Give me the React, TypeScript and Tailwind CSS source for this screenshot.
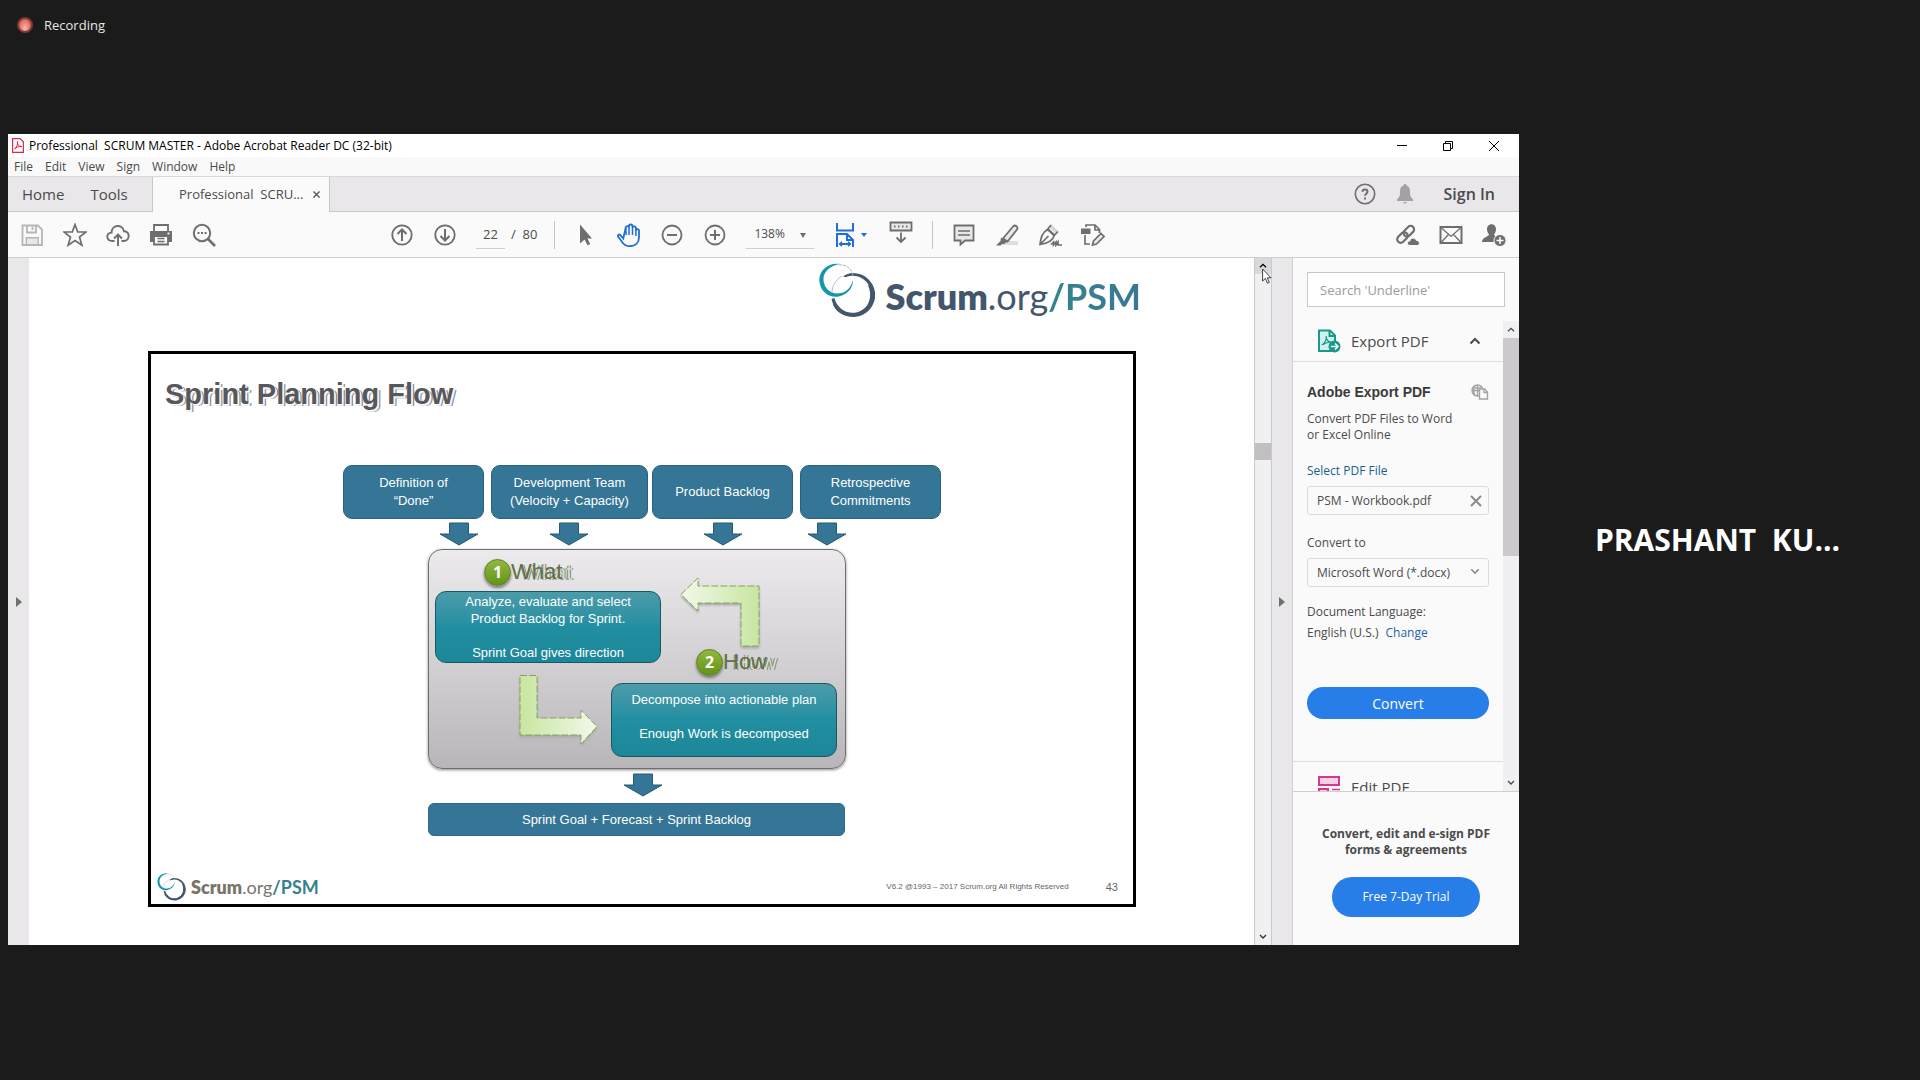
import type { ReactNode } from 'react';

const UI = "font-['Open_Sans','Noto_Sans',sans-serif]";
const ARIAL = "font-['Liberation_Sans',Arial,sans-serif]";

function Icon({ children, className = 'size-6' }: { children: ReactNode; className?: string }) {
  return (
    <svg
      viewBox="0 0 24 24"
      className={className}
      fill="none"
      stroke="currentColor"
      strokeWidth="1.8"
      aria-hidden="true"
    >
      {children}
    </svg>
  );
}

function Tool({ label, children, className = 'text-[#6e6e6e]' }: { label: string; children: ReactNode; className?: string }) {
  return (
    <button type="button" aria-label={label} className={`shrink-0 ${className}`}>
      <Icon>{children}</Icon>
    </button>
  );
}

function Chevron({ up = false, className = '' }: { up?: boolean; className?: string }) {
  return (
    <svg viewBox="0 0 12 8" className={className} fill="none" stroke="currentColor" strokeWidth="2" aria-hidden="true">
      <path d={up ? 'M1.5 6.5 6 2l4.5 4.5' : 'M1.5 1.5 6 6l4.5-4.5'} />
    </svg>
  );
}

function LogoMark({ className }: { className: string }) {
  return (
    <svg viewBox="0 0 56 55" className={className} aria-hidden="true">
      <path
        fillRule="evenodd"
        fill="#44566c"
        d="M34 10a22 22 0 1 1-21.500 26l3-1A18.500 18.500 0 1 0 27 14l-3 0C27 11 30 10 34 10Z"
      />
      <path d="M15 41c4 9 14 13 23 10" fill="none" stroke="#44566c" strokeWidth="2.500" />
      <path d="M50 22c5 11 1 23-9 28" fill="none" stroke="#44566c" strokeWidth="2" />
      <path
        fill="#1597ab"
        d="M21 1C9-1-1 8 .500 19 2 31 14 37 24 32c7-3 10-9 10-15-2 7-6 12-12 13C13 32 5 26 4.500 17 4 9 11 2.500 21 1Z"
      />
      <path d="M20 2c8-1 13 5 14 10" fill="none" stroke="#9db6bf" strokeWidth="1" strokeDasharray="3 1" />
      <path d="M13 30c0-8 4-13 10-17" fill="none" stroke="#b7c1ca" strokeWidth="1" />
    </svg>
  );
}

const WINDOW_MENU = ['File', 'Edit', 'View', 'Sign', 'Window', 'Help'];

function TitleBar() {
  return (
    <div className="flex h-[23px] items-center bg-white pl-1 text-[12px] text-black">
      <svg viewBox="0 0 12 15" className="h-[15px] w-3" fill="none" stroke="#e0284a" aria-hidden="true">
        <path d="M.6.6h7.600l3.200 3.200v10.600H.6Z" strokeWidth="1.200" />
        <path d="M2.500 11c2-1 3.500-5 3-7.500C5 6.500 7 8.500 9.800 8.500 7 8 4 9.500 2.500 11Z" />
      </svg>
      <span className="ml-[5px] whitespace-pre">{'Professional  SCRUM MASTER - Adobe Acrobat Reader DC (32-bit)'}</span>
      <div className="ml-auto mr-5 flex items-center gap-9">
        <button type="button" aria-label="Minimize">
          <svg viewBox="0 0 10 10" className="size-[10px]" stroke="#000"><path d="M0 4.500h10" /></svg>
        </button>
        <button type="button" aria-label="Restore">
          <svg viewBox="0 0 10 10" className="size-[10px]" fill="none" stroke="#000"><path d="M.5 2.500h7v7h-7ZM2.500 2.500v-2h7v7h-2" /></svg>
        </button>
        <button type="button" aria-label="Close">
          <svg viewBox="0 0 10 10" className="size-[10px]" stroke="#000"><path d="m0 0 10 10M10 0 0 10" /></svg>
        </button>
      </div>
    </div>
  );
}

function MenuBar() {
  return (
    <nav className="flex h-5 items-center gap-3 border-b border-[#d8d8d8] bg-[#f9f9f9] pl-[6px] text-[12px] text-[#4a4a4a]">
      {WINDOW_MENU.map((item) => (
        <button key={item} type="button">{item}</button>
      ))}
    </nav>
  );
}

function TabBar() {
  return (
    <div className="flex h-[35px] items-stretch bg-[#e9e7ea] text-[#4b4b4b]">
      <div className="flex w-[144px] items-center gap-[26px] border-b border-[#c8c8c8] pl-[14px] text-[15px]">
        <button type="button">Home</button>
        <button type="button">Tools</button>
      </div>
      <div className="flex w-[178px] items-center border-x border-[#c8c8c8] bg-[#fafafa] pl-[26px] pr-[9px] text-[13px]">
        <button type="button" className="whitespace-pre">{'Professional  SCRU...'}</button>
        <button type="button" aria-label="Close tab" className="ml-auto">
          <svg viewBox="0 0 8 8" className="size-[7px]" stroke="#555" strokeWidth="1.500"><path d="m.5.5 7 7M7.500.5l-7 7" /></svg>
        </button>
      </div>
      <div className="flex flex-1 items-center justify-end gap-[17px] border-b border-[#c8c8c8] pr-6">
        <button type="button" aria-label="Help" className="text-[#6e6e6e]">
          <svg viewBox="0 0 22 22" className="size-[22px]" fill="none" stroke="currentColor" strokeWidth="1.600">
            <circle cx="11" cy="11" r="9.700" />
            <path d="M8.500 8.800c0-3.200 5-3.200 5 0 0 1.900-2.500 1.900-2.500 4" strokeWidth="2" />
            <path d="M11 14.500v2" strokeWidth="2" />
          </svg>
        </button>
        <button type="button" aria-label="Notifications" className="text-[#a2a2a2]">
          <Icon className="size-6">
            <path d="M12 2c-1.200 0-1.500.7-1.500 1.600C7.500 4.500 7 7 7 11c0 3-1 4.500-3 6.500V19h16v-1.500c-2-2-3-3.500-3-6.500 0-4-.5-6.500-3.500-7.400C13.500 2.700 13.200 2 12 2ZM10 20h4l-2 2Z" fill="currentColor" stroke="none" />
          </Icon>
        </button>
        <button type="button" className="ml-[10px] text-[16px] font-semibold">Sign In</button>
      </div>
    </div>
  );
}

function Toolbar() {
  return (
    <div className="flex h-[46px] items-center border-b border-[#cfcfcf] bg-[#fafafa] pl-3 pr-[13px] text-[12px] text-[#4b4b4b]">
      <div className="flex w-[370px] shrink-0 items-center gap-[19px]">
        <Tool label="Save" className="text-[#b5b5b5]">
          <path d="M2.500 2.500h15.500l4 4v15.500H2.500Z" />
          <path d="M7 3v6.500h9V3M12.500 4v3M6.500 21.500V15h11.500v6.500" />
          <path d="M7 15.500h10.500V21H7Z" fill="#e8e8e8" stroke="none" />
        </Tool>
        <Tool label="Star">
          <path d="m12 1.500 2.700 7.500h8.300l-6.500 5 2.400 8.200L12 17.500l-6.900 4.700 2.400-8.200L1 9h8.300Z" strokeWidth="1.700" />
        </Tool>
        <Tool label="Upload">
          <path d="M8.500 18H6.500C0 18-.5 10.200 5.600 9.600 5.500 1.500 16.500.5 18 8.300c6.300-.3 6.300 9.700-.3 9.700H15.500M12 23V12M8 15.500l4-4 4 4" strokeWidth="1.900" />
        </Tool>
        <Tool label="Print">
          <path d="M1 8h22v11h-4v-5H5v5H1Z" fill="currentColor" stroke="none" />
          <path d="M5 8V2h14v6M5 14v7.500h14V14" />
          <path d="M8.500 15.500h7M8.500 18.500h7" strokeWidth="1.300" />
          <path d="M18.500 10.500h2" stroke="#fff" />
        </Tool>
        <Tool label="Find">
          <circle cx="10" cy="10" r="8.200" strokeWidth="2" />
          <path d="m16 16 7 7" strokeWidth="2.600" />
          <path d="M5.500 10h2M9 10h2M12.500 10h2" />
        </Tool>
      </div>
      <div className="flex items-center">
        <div className="flex items-center gap-[19px]">
          <Tool label="Previous page">
            <circle cx="12" cy="12" r="9.700" /><path d="M12 18V7M7.500 11 12 6.500 16.500 11" strokeWidth="2" />
          </Tool>
          <Tool label="Next page">
            <circle cx="12" cy="12" r="9.700" /><path d="M12 6v11M7.500 13l4.500 4.500 4.500-4.500" strokeWidth="2" />
          </Tool>
        </div>
        <input aria-label="Page number" defaultValue="22" className="ml-[19px] h-7 w-[29px] border-b border-[#cfcfcf] bg-transparent text-center text-[13px]" />
        <span className="ml-[6px] whitespace-pre text-[13px]">{'/  80'}</span>
        <div className="ml-[17px] h-7 w-px bg-[#c4c4c4]" />
        <div className="ml-[19px] flex items-center gap-[19px]">
          <Tool label="Select">
            <path d="M6 1.500v19l4.600-4 2.900 5.800 2.700-1.300-2.800-5.600H18Z" fill="currentColor" stroke="none" />
          </Tool>
          <Tool label="Hand" className="text-[#1f6fd6]">
            <path d="M6.300 15.500 3.400 12.200c-1.600-1.600-3.300.2-2.100 1.600l4.500 6.200c1.700 2.300 3.600 3.200 7 3.200 6 0 9.200-3.700 9.200-9.200V7.800c0-2.200-3-2.200-3.100 0V5c0-2.200-3.400-2.200-3.400 0V3.300c0-2.400-3.600-2.400-3.600 0V4.600c-.2-2.100-3.200-2-3.200.2Z" />
            <path d="M8.700 4.800 9.200 12M12 3.300V12M15.500 4.500V12M18.900 7V13" strokeWidth="1.500" />
          </Tool>
          <Tool label="Zoom out">
            <circle cx="12" cy="12" r="9.500" /><path d="M7 12h10" strokeWidth="2" />
          </Tool>
          <Tool label="Zoom in">
            <circle cx="12" cy="12" r="9.500" /><path d="M7 12h10M12 7v10" strokeWidth="2" />
          </Tool>
        </div>
        <div className="relative ml-[19px] h-7 w-[68px] border-b border-[#cfcfcf]">
          <select aria-label="Zoom level" defaultValue="138%" className="size-full appearance-none bg-transparent pl-2 text-[12px]">
            <option>138%</option>
          </select>
          <svg viewBox="0 0 6 5" className="pointer-events-none absolute right-2 top-3 h-[5px] w-[6px]" fill="#6e6e6e"><path d="M0 0h6L3 5Z" /></svg>
        </div>
        <button type="button" aria-label="Fit width" className="ml-[19px] flex items-center gap-1 text-[#1f6fd6]">
          <Icon>
            <path d="M4 0v7.500h16V0M4 24V11h10l6 6v7M14 11v6h6M7 21h10" strokeWidth="2" />
            <path d="m9 18.800-2.500 2.200L9 23.200M15 18.800l2.500 2.200-2.500 2.200" strokeWidth="1.400" />
          </Icon>
          <svg viewBox="0 0 6 4" className="h-1 w-[6px]" fill="currentColor"><path d="M0 0h6L3 4Z" /></svg>
        </button>
        <div className="ml-[22px]">
          <Tool label="Read mode">
            <path d="M1.500 2.500h21v8h-21Z" fill="#e8e8e8" />
            <path d="M5 6.500h1.500M9 6.500h1.500M13 6.500h1.500M17 6.500h1.500M12 12.500V22M7.500 17.500 12 22l4.500-4.500" />
          </Tool>
        </div>
        <div className="ml-[19px] h-7 w-px bg-[#c4c4c4]" />
        <div className="ml-[19px] flex items-center gap-[19px]">
          <Tool label="Comment">
            <path d="M2.500 2.500h19v15H13l-4.500 4v-4h-6Z" fill="#e8e8e8" /><path d="M6 8h12M6 12h12" strokeWidth="1.400" />
          </Tool>
          <Tool label="Highlight">
            <path d="M8 18h15v4H4Z" fill="#dedede" stroke="none" />
            <path d="M8 15.500 18 3.500c2-2.300 5.700.4 4 3L12.500 18.500Z" fill="#e8e8e8" />
            <path d="m6 14.500 6 4.500-3 2H7l-1.500 1.500H1L5.500 18Z" fill="currentColor" stroke="none" />
          </Tool>
          <Tool label="Sign">
            <path d="m13 1 7 7-2.500 2.500-6-6Z" fill="#d6d6d6" stroke="none" />
            <path d="M2 21.500C3 14 4 10 10 6l6.500 6C15 17.500 9 20.500 2 21.500Zm0 0 8.500-8.500M13 2 9.500 6.500 16 12.500l4-4M13 21.500l2.500-2.500v3l2.500-3v3l2-3v3h4" strokeWidth="1.700" />
          </Tool>
          <Tool label="Edit">
            <path d="M5 4V2h9l4.500 4.500V10M14 2v5h5M4 12v9h5" strokeWidth="1.700" />
            <path d="M0 5.500h9.500V11H0Z" fill="currentColor" stroke="none" />
            <path d="m11.500 22 1-4L20 10.500l3 3-7.500 7.500Z" fill="#e8e8e8" strokeWidth="1.700" />
          </Tool>
        </div>
      </div>
      <div className="ml-auto flex items-center gap-[19px]">
        <Tool label="Share link">
          <g transform="rotate(-45 10 11)" strokeWidth="2.200">
            <rect x="-1" y="7.500" width="12" height="7" rx="3.500" />
            <rect x="8" y="7.500" width="12" height="7" rx="3.500" />
          </g>
          <path d="M14 22.500c-3.500 0-3.500-4.500 0-4.700.5-3.500 5.500-3.500 6.200-.5 4 .2 4 5.200 1 5.200Z" fill="currentColor" stroke="#fafafa" strokeWidth="1" />
        </Tool>
        <Tool label="Email">
          <path d="M1.500 4h21v16h-21Z" strokeWidth="2" /><path d="m2 4.500 10 9 10-9M2 19.500l7.500-8M22 19.500l-7.500-8" strokeWidth="1.300" />
        </Tool>
        <Tool label="Share with people">
          <path d="M5 6c0-6.500 9-6.500 9 0 0 3-1 4-2 5.500 0 2 6 2 6 7.500H0c0-5 7-5.500 7-7.500C6 10 5 9 5 6Z" fill="currentColor" stroke="none" />
          <circle cx="18" cy="17.500" r="6" fill="currentColor" stroke="#fafafa" strokeWidth="1" />
          <path d="M14.500 17.500h7M18 14v7" stroke="#fff" strokeWidth="1.500" />
        </Tool>
      </div>
    </div>
  );
}

function DownArrow({ className }: { className: string }) {
  return (
    <svg viewBox="0 0 40 24" className={`absolute h-6 w-10 ${className}`} aria-hidden="true">
      <path d="M10.500 1h19v11H39L20 23 1 12h9.500Z" fill="#357595" stroke="#245a75" />
    </svg>
  );
}

function InputBox({ className, children }: { className: string; children: ReactNode }) {
  return (
    <div className={`flex h-[54px] items-center justify-center rounded-[9px] border border-[#28617f] bg-[#357595] pb-px text-center text-[13px] leading-[18px] text-white ${className}`}>
      <p>{children}</p>
    </div>
  );
}

function StepLabel({ n, text, className }: { n: number; text: string; className: string }) {
  return (
    <div className={`absolute flex items-center ${className}`}>
      <span className="flex size-[27px] items-center justify-center rounded-full border border-[#5c7d1c] bg-linear-to-b from-[#93b83e] to-[#5f9416] font-['Open_Sans',sans-serif] text-[16px] font-bold text-white shadow-[0_2px_3px_#777]">
        {n}
      </span>
      <span className="text-[22px] leading-7 text-[#5f7048] [text-shadow:10px_1px_0_#dcdcd8,9px_1px_0_#77876a,11px_1px_0_#77876a]">{text}</span>
    </div>
  );
}

function StepBox({ className, children }: { className: string; children: ReactNode }) {
  return (
    <div className={`absolute flex w-[226px] items-center justify-center rounded-[11px] border border-[#165a60] bg-linear-to-b from-[#4b9baa] via-[#218fa1] to-[#1c8799] text-center text-[13px] leading-[17px] text-white ${className}`}>
      <p>{children}</p>
    </div>
  );
}

function Diagram() {
  return (
    <div className="relative ml-[192px] mt-[51px] w-[598px]">
      <div className="flex items-center">
        <InputBox className="w-[141px]">Definition of<br />“Done”</InputBox>
        <InputBox className="ml-[7px] w-[157px]">Development Team<br />(Velocity + Capacity)</InputBox>
        <InputBox className="ml-[4px] w-[141px]">Product Backlog</InputBox>
        <InputBox className="ml-[7px] w-[141px]">Retrospective<br />Commitments</InputBox>
      </div>
      <DownArrow className="left-[96px] top-[57px]" />
      <DownArrow className="left-[206px] top-[57px]" />
      <DownArrow className="left-[360px] top-[57px]" />
      <DownArrow className="left-[464px] top-[57px]" />
      <div className="relative ml-[85px] mt-[30px] h-[220px] w-[418px] rounded-[14px] border border-[#6f6d70] bg-linear-to-b from-[#eceaed] via-[#d3d1d4] to-[#b8b6b9] shadow-[0_1px_3px_#888]">
        <StepLabel n={1} text="What" className="left-[55px] top-[8px]" />
        <StepBox className="left-[6px] top-[41px] h-[72px]">
          Analyze, evaluate and select<br />Product Backlog for Sprint.<br /><br />Sprint Goal gives direction
        </StepBox>
        <StepLabel n={2} text="How" className="left-[267px] top-[98px]" />
        <StepBox className="left-[182px] top-[133px] h-[74px] pb-2">
          Decompose into actionable plan<br /><br />Enough Work is decomposed
        </StepBox>
        <svg viewBox="0 0 84 72" className="absolute left-[250px] top-[26px] h-[72px] w-[84px] drop-shadow-[0_2px_1px_#aaa]" aria-hidden="true">
          <defs>
            <linearGradient id="flow-left" x1="0" x2="1"><stop offset="0" stopColor="#f2f8ea" /><stop offset="1" stopColor="#c8e6a0" /></linearGradient>
          </defs>
          <path d="M2 18.500 19 2v8h61v60H62V27H19v8Z" fill="url(#flow-left)" stroke="#86a45c" strokeDasharray="7 2" />
        </svg>
        <svg viewBox="0 0 84 72" className="absolute left-[89px] top-[124px] h-[72px] w-[84px] drop-shadow-[0_2px_1px_#aaa]" aria-hidden="true">
          <defs>
            <linearGradient id="flow-right" x1="0" x2="1"><stop offset="0" stopColor="#c8e6a0" /><stop offset="1" stopColor="#f2f8ea" /></linearGradient>
          </defs>
          <path d="M2 1.500h17V44h44v-8l16 16.500L63 70v-9H2Z" fill="url(#flow-right)" stroke="#86a45c" strokeDasharray="7 2" />
        </svg>
      </div>
      <DownArrow className="left-[280px] top-[308px]" />
      <div className="ml-[85px] mt-[34px] flex h-[33px] w-[417px] items-center justify-center rounded-[6px] border border-[#2d6b8a] bg-[#357595] text-[13px] text-white">
        Sprint Goal + Forecast + Sprint Backlog
      </div>
    </div>
  );
}

function Slide() {
  return (
    <section className={`ml-[119px] mr-[118px] mt-[30px] border-[3px] border-black bg-white ${ARIAL}`}>
      <h1 className="ml-[14px] mt-[22px] text-[29px] font-bold leading-9 text-[#58585c] [text-shadow:1px_1px_0_#fff,2px_2px_0_#e6e9ef,3px_2px_0_#77777c]">
        Sprint Planning Flow
      </h1>
      <div className="pt-[2px]">
        <Diagram />
      </div>
      <footer className="mb-px mt-[35px] flex h-[32px] items-center pl-[6px] pr-[15px]">
        <LogoMark className="h-7 w-[29px]" />
        <span className="ml-[5px] font-['Lato',sans-serif] text-[18px] leading-6 text-[#77746a]">
          <b className="font-extrabold">Scrum</b>.org<b className="text-[#38808e]">/PSM</b>
        </span>
        <span className="ml-auto text-[8px] text-[#666]">V6.2 @1993 – 2017 Scrum.org All Rights Reserved</span>
        <span className="ml-[37px] text-[11px] text-[#666]">43</span>
      </footer>
    </section>
  );
}

function DocumentPane() {
  return (
    <main className="min-w-0 flex-1 bg-[#fefefe]">
      <div className="flex h-[63px] items-end justify-end pb-[3px] pr-[113px]">
        <LogoMark className="h-[55px] w-14" />
        <span className="ml-[10px] font-['Lato',sans-serif] text-[36px] leading-[44px] text-[#44566c]">
          <b className="font-extrabold">Scrum</b>.org<b className="bg-linear-to-r from-[#35858a] to-[#3b7598] bg-clip-text text-transparent">/PSM</b>
        </span>
      </div>
      <Slide />
    </main>
  );
}

function DocumentScrollbar() {
  return (
    <div className="relative flex w-[18px] flex-col border-x border-[#c9c9c9] bg-[#f0eff1] text-[#333]">
      <button type="button" aria-label="Scroll up" className="flex h-4 items-center justify-center bg-[#d9d8da] text-black">
        <Chevron up className="w-2" />
      </button>
      <div className="mt-[169px] h-[17px] bg-[#c1bfc2]" />
      <button type="button" aria-label="Scroll down" className="mt-auto flex h-[17px] items-center justify-center">
        <Chevron className="w-2" />
      </button>
      <svg viewBox="0 0 10 16" className="absolute left-[7px] top-[10px] z-10 h-4 w-[10px]" fill="#fff" stroke="#111" strokeWidth=".8" aria-hidden="true">
        <path d="M.6 1v12l2.800-2.600 2 4.800 1.900-.8-2-4.600H9Z" />
      </svg>
    </div>
  );
}

function SidePanel() {
  return (
    <aside className="flex w-[227px] shrink-0 flex-col border-l border-[#cfcfcf] bg-[#fafafa] text-[12px] text-[#4b4b4b]">
      <input
        type="search"
        aria-label="Search tools"
        placeholder="Search 'Underline'"
        className="ml-[14px] mr-[14px] mt-[14px] h-[35px] border border-[#c8c8c8] bg-white pl-3 text-[13px] placeholder:text-[#9a9a9a]"
      />
      <div className="mt-[14px] flex min-h-[470px] grow basis-[0px] overflow-hidden">
        <div className="h-0 min-w-0 flex-1">
          <button type="button" className="flex h-[41px] w-full items-center border-b border-[#dedede] pl-6 pr-[22px] text-[15px]">
            <svg viewBox="0 0 24 24" className="size-6" fill="none" stroke="#17998c" strokeWidth="2" aria-hidden="true">
              <path d="M2 1.500h11l5 5V22H2Z" fill="#d4eeeb" />
              <path d="M12.500 1v6h6" />
              <path d="M5 16c3-2 4.500-6 4.200-9-.2 4 2 6 5 6-3.500 0-6 1-9.200 3Z" strokeWidth="1.200" />
              <circle cx="17.500" cy="17.500" r="6" fill="#17998c" stroke="none" />
              <path d="M13.800 17.500h7M18 14.500l3 3-3 3" stroke="#fff" strokeWidth="1.500" />
            </svg>
            <span className="ml-[10px]">Export PDF</span>
            <Chevron up className="ml-auto w-3" />
          </button>
          <div className="px-[14px] pt-[20px]">
            <div className="flex items-center justify-between">
              <h2 className={`${ARIAL} text-[14px] font-bold leading-5 text-[#3a3a3a]`}>Adobe Export PDF</h2>
              <svg viewBox="0 0 18 16" className="h-4 w-[18px]" fill="none" stroke="#a3a3a3" strokeWidth="1.400" aria-hidden="true">
                <circle cx="6.500" cy="6.500" r="5.500" />
                <path d="M6.500 1v11M1 6.500h11M3 3c2.500 1.500 5 1.500 7 0M4 1.500c-1.500 3-1.500 7 0 10" />
                <path d="M8.500 5h5l3 3v7h-8Z" fill="#fafafa" /><path d="M13 5v3.500h3.500" />
              </svg>
            </div>
            <p className="mt-[9px] leading-4">Convert PDF Files to Word<br />or Excel Online</p>
            <a href="#select" className="mt-5 block leading-4 text-[#17638c]">Select PDF File</a>
            <div className="mt-[7px] flex h-[29px] items-center justify-between rounded-[3px] border border-[#dcdcdc] pl-[9px] pr-[6px]">
              <span>PSM - Workbook.pdf</span>
              <button type="button" aria-label="Remove file">
                <svg viewBox="0 0 12 12" className="size-3" stroke="#8a8a8a" strokeWidth="2"><path d="m1 1 10 10M11 1 1 11" /></svg>
              </button>
            </div>
            <label htmlFor="format" className="mt-[20px] block leading-4">Convert to</label>
            <div className="relative mt-[7px]">
              <select id="format" className="h-[29px] w-full appearance-none rounded-[3px] border border-[#dcdcdc] bg-transparent pl-[9px]">
                <option>Microsoft Word (*.docx)</option>
              </select>
              <Chevron className="pointer-events-none absolute right-[9px] top-[10px] w-[10px] text-[#8a8a8a]" />
            </div>
            <p className="mt-[17px] leading-4">Document Language:</p>
            <p className="mt-[5px] leading-4">English (U.S.)<a href="#language" className="ml-[7px] text-[#1f62ad]">Change</a></p>
            <button type="button" className="mt-[46px] h-8 w-full rounded-full bg-[#277ee8] text-[14px] text-white">Convert</button>
          </div>
          <button type="button" className="mt-[42px] flex w-full items-start border-t border-[#dedede] pl-6 pt-[13px] text-[15px]">
            <svg viewBox="0 0 24 24" className="size-6" fill="none" stroke="#d83790" strokeWidth="2" aria-hidden="true">
              <path d="M2 2h20v8H2Z" fill="#f5d3e6" /><path d="M2 14h9v8H2Z" fill="#f5d3e6" /><path d="M15 14.500h8M15 19h8" strokeWidth="1.500" />
            </svg>
            <span className="ml-[10px] mt-px">Edit PDF</span>
          </button>
        </div>
        <div className="flex w-4 flex-col bg-[#f0eff1]">
          <button type="button" aria-label="Scroll tools up" className="flex h-[17px] shrink-0 items-center justify-center"><Chevron up className="w-2" /></button>
          <div className="h-[218px] bg-[#cbc9cc]" />
          <button type="button" aria-label="Scroll tools down" className="mt-auto flex h-[17px] items-center justify-center"><Chevron className="w-2" /></button>
        </div>
      </div>
      <div className="flex h-[154px] flex-col items-center border-t border-[#cfcfcf] pt-[34px]">
        <p className="text-center font-bold leading-4 text-[#4b4b4b]">Convert, edit and e-sign PDF<br />forms &amp; agreements</p>
        <button type="button" className="mt-[19px] h-10 w-[148px] rounded-full bg-[#277ee8] text-[12px] text-white">Free 7-Day Trial</button>
      </div>
    </aside>
  );
}

export default function App() {
  return (
    <div className={`flex min-h-screen flex-col bg-[#1b1b1b] ${UI}`}>
      <header className="flex h-[134px] items-start pl-[17px] pt-[15px] text-[13px] leading-5 text-[#e6e6e6]">
        <span className="mr-[11px] mt-[2px] size-4 rounded-full border-2 border-[#7a3a34] bg-radial-[at_50%_75%] from-[#f4b9b0] to-[#d5402f]" />
        Recording
      </header>
      <div className="flex flex-1 pb-[135px] pl-2">
        <div className="flex min-w-0 flex-1 flex-col bg-white">
          <TitleBar />
          <MenuBar />
          <TabBar />
          <Toolbar />
          <div className="flex flex-1">
            <button type="button" aria-label="Open navigation pane" className="flex w-[21px] shrink-0 items-center justify-center bg-[#e9e7ea]">
              <svg viewBox="0 0 6 10" className="h-[10px] w-[6px]" fill="#707070"><path d="M0 0v10l6-5Z" /></svg>
            </button>
            <DocumentPane />
            <DocumentScrollbar />
            <button type="button" aria-label="Collapse tools pane" className="flex w-5 shrink-0 items-center justify-center bg-[#e9e7ea]">
              <svg viewBox="0 0 6 10" className="h-[10px] w-[6px]" fill="#707070"><path d="M0 0v10l6-5Z" /></svg>
            </button>
            <SidePanel />
          </div>
        </div>
        <section className="flex w-[401px] shrink-0 items-center justify-center">
          <h2 className="whitespace-pre pr-1 text-[30px] font-bold text-white">{'PRASHANT  KU...'}</h2>
        </section>
      </div>
    </div>
  );
}
